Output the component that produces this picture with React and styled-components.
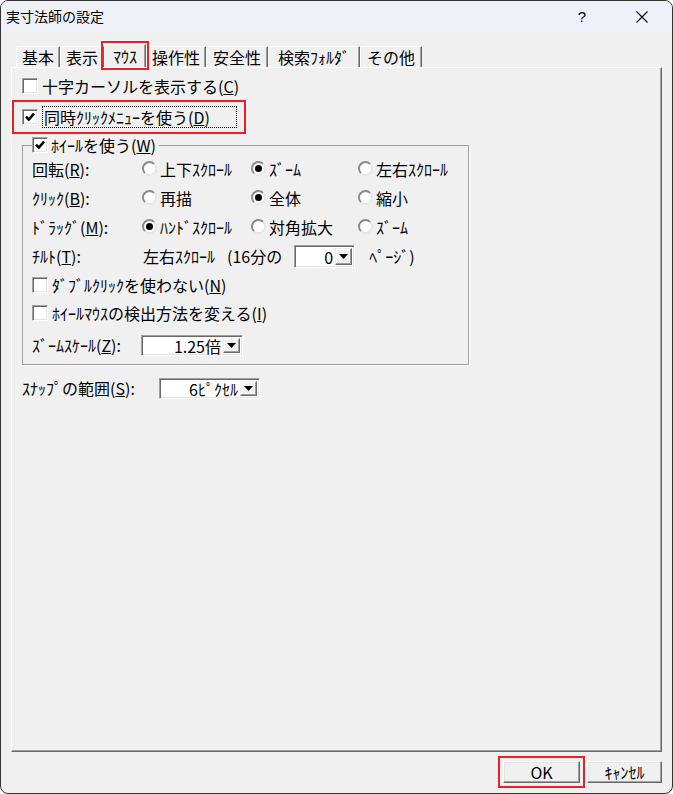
import React from 'react'
import styled, { createGlobalStyle } from 'styled-components'

const GlobalStyle = createGlobalStyle`
  html, body {
    margin: 0;
    padding: 0;
    background: #ffffff;
  }
  body {
    font-family: "Noto Sans CJK JP", "Noto Sans", sans-serif;
    font-size: 16px;
    color: #000;
  }
`

const Window = styled.div`
  width: 673px;
  height: 794px;
  box-sizing: border-box;
  border: 1px solid #333;
  border-radius: 8px;
  overflow: hidden;
  background: #f0f0f0;
  display: flex;
  flex-direction: column;
`

const TitleBar = styled.div`
  height: 31px;
  flex: none;
  background: #eef1f8;
  display: flex;
  align-items: center;
  padding-left: 5px;
`

const Title = styled.div`
  flex: 1;
  font-size: 14px;
  line-height: 31px;
`

const CaptionButton = styled.div`
  width: 60px;
  height: 31px;
  display: flex;
  align-items: center;
  justify-content: center;
  font-family: "Liberation Sans", sans-serif;
  font-size: 15px;
`

const Body = styled.div`
  flex: 1;
  display: flex;
  flex-direction: column;
  padding: 0 10px;
`

const TabStrip = styled.div`
  display: flex;
  align-items: flex-end;
  margin-top: 14px;
  padding-left: 5px;
  height: 21px;
`

const Tab = styled.div`
  height: ${p => (p.$active ? 23 : 21)}px;
  box-sizing: border-box;
  padding: 0 ${p => p.$pad || 5}px;
  display: flex;
  align-items: center;
  border-left: 1px solid #fff;
  border-top: 1px solid #fff;
  border-right: 1px solid #696969;
  box-shadow: inset -1px 0 #a0a0a0;
  line-height: 1;
  position: relative;
  ${p => p.$active && `
    outline: 2px solid #e8202a;
    outline-offset: 1px;
    z-index: 1;
  `}
`

const Panel = styled.div`
  height: 685px;
  box-sizing: border-box;
  border-top: 1px solid #fff;
  border-left: 1px solid #fff;
  border-right: 1px solid #696969;
  border-bottom: 1px solid #696969;
  box-shadow: inset -1px -1px #a0a0a0;
  padding: 7px 0 0 10px;
  display: flex;
  flex-direction: column;
  align-items: flex-start;
`

const Row = styled.div`
  display: flex;
  align-items: center;
  height: ${p => p.$h || 21}px;
  margin-top: ${p => p.$mt || 0}px;
  gap: ${p => p.$gap ?? 4}px;
`

const HighlightRow = styled.div`
  display: flex;
  align-items: center;
  gap: 4px;
  height: 30px;
  width: 230px;
  box-sizing: border-box;
  margin: 6px 0 0 -8px;
  padding-left: 8px;
  outline: 2px solid #e8202a;
`

const FocusLabel = styled.span`
  border: 1px dotted #000;
  padding: 1px 2px 1px 1px;
  min-width: 190px;
  line-height: 18px;
`

const Box = styled.span`
  width: 16px;
  height: 16px;
  flex: none;
  box-sizing: border-box;
  background: #fff;
  border: 1px solid;
  border-color: #a0a0a0 #fff #fff #a0a0a0;
  box-shadow: inset 1px 1px #696969, inset -1px -1px #e3e3e3;
  display: flex;
  align-items: center;
  justify-content: center;
`

const Check = ({ checked }) => (
  <Box>
    {checked && (
      <svg width="10" height="10" viewBox="0 0 10 10">
        <path d="M1 4.6 L3.8 7.6 L9 1.6" stroke="#000" strokeWidth="2.6" fill="none" />
      </svg>
    )}
  </Box>
)

const RadioDot = styled.span`
  width: 15px;
  height: 15px;
  flex: none;
  box-sizing: border-box;
  border-radius: 50%;
  background: #fff;
  border: 2px solid;
  border-color: #8a8a8a #e6e6e6 #e6e6e6 #8a8a8a;
  display: flex;
  align-items: center;
  justify-content: center;
  &::after {
    content: '';
    width: 7px;
    height: 7px;
    border-radius: 50%;
    background: ${p => (p.$on ? '#000' : 'transparent')};
  }
`

const Option = styled.span`
  display: flex;
  align-items: center;
  gap: 3px;
  white-space: nowrap;
`

const Radio = ({ on, children }) => (
  <Option>
    <RadioDot $on={on} />
    {children}
  </Option>
)

const Group = styled.fieldset`
  margin: 4px 0 0 0;
  padding: 0 9px 7px 9px;
  width: 447px;
  box-sizing: border-box;
  min-width: 0;
  border: 1px solid #a0a0a0;
  box-shadow: 1px 1px 0 #fff;
`

const Legend = styled.legend`
  padding: 0 3px 0 0;
  height: 18px;
  display: flex;
  align-items: center;
  gap: 3px;
`

const Grid = styled.div`
  display: grid;
  grid-template-columns: 110px 109px 107px 1fr;
  grid-auto-rows: 29px;
  align-items: center;
`

const Label = styled.span`
  white-space: nowrap;
  min-width: ${p => p.$w || 0}px;
`

const TiltRow = styled.div`
  display: flex;
  align-items: center;
  height: 30px;
`

const TiltPart = styled.span`
  white-space: nowrap;
  margin-left: ${p => p.$ml || 0}px;
`

const ComboFrame = styled.div`
  width: ${p => p.$w}px;
  height: ${p => p.$h || 21}px;
  margin-left: ${p => p.$ml || 0}px;
  flex: none;
  box-sizing: border-box;
  background: #fff;
  border: 1px solid;
  border-color: #a0a0a0 #fff #fff #a0a0a0;
  box-shadow: inset 1px 1px #696969, inset -1px -1px #e3e3e3;
  padding: 2px;
  display: flex;
`

const ComboValue = styled.span`
  flex: 1;
  text-align: right;
  padding-right: 2px;
  line-height: ${p => (p.$h || 21) - 4}px;
  white-space: nowrap;
`

const ComboArrow = styled.span`
  width: 17px;
  box-sizing: border-box;
  background: #f0f0f0;
  border: 1px solid;
  border-color: #f0f0f0 #696969 #696969 #f0f0f0;
  box-shadow: inset -1px -1px #a0a0a0, inset 1px 1px #fff;
  display: flex;
  align-items: center;
  justify-content: center;
`

const Combo = ({ w, h, ml, children }) => (
  <ComboFrame $w={w} $h={h} $ml={ml}>
    <ComboValue $h={h}>{children}</ComboValue>
    <ComboArrow>
      <svg width="9" height="5" viewBox="0 0 9 5">
        <path d="M0 0 H9 L4.5 5 Z" fill="#000" />
      </svg>
    </ComboArrow>
  </ComboFrame>
)

const Footer = styled.div`
  display: flex;
  justify-content: flex-end;
  gap: 4px;
  margin-top: 9px;
`

const Button = styled.div`
  width: ${p => p.$w}px;
  height: 22px;
  box-sizing: border-box;
  background: #f0f0f0;
  border: 1px solid;
  border-color: #fff #696969 #696969 #fff;
  box-shadow: inset -1px -1px #a0a0a0, inset 1px 1px #e3e3e3;
  display: flex;
  align-items: center;
  justify-content: center;
  font-size: ${p => p.$fs || 16}px;
  ${p => p.$marked && `
    outline: 2px solid #e8202a;
    outline-offset: 3px;
  `}
`

const ButtonSlot = styled.div`
  padding-right: 3px;
`

const u = ch => <u>{ch}</u>

export default function App() {
  return (
    <>
      <GlobalStyle />
      <Window>
        <TitleBar>
          <Title>実寸法師の設定</Title>
          <CaptionButton>?</CaptionButton>
          <CaptionButton>
            <svg width="14" height="14" viewBox="0 0 14 14">
              <path d="M1.5 1.5 L12.5 12.5 M12.5 1.5 L1.5 12.5" stroke="#000" strokeWidth="1.1" />
            </svg>
          </CaptionButton>
        </TitleBar>
        <Body>
          <TabStrip>
            <Tab>基本</Tab>
            <Tab>表示</Tab>
            <Tab $active $pad={8}>ﾏｳｽ</Tab>
            <Tab>操作性</Tab>
            <Tab $pad={6}>安全性</Tab>
            <Tab $pad={9}>検索ﾌｫﾙﾀﾞ</Tab>
            <Tab $pad={6}>その他</Tab>
          </TabStrip>
          <Panel>
            <Row $h={21}>
              <Check />
              <span>十字カーソルを表示する({u('C')})</span>
            </Row>
            <HighlightRow>
              <Check checked />
              <FocusLabel>同時ｸﾘｯｸﾒﾆｭｰを使う({u('D')})</FocusLabel>
            </HighlightRow>
            <Group>
              <Legend>
                <Check checked />
                <span>ﾎｲｰﾙを使う({u('W')})</span>
              </Legend>
              <Grid>
                <Label>回転({u('R')}):</Label>
                <Radio>上下ｽｸﾛｰﾙ</Radio>
                <Radio on>ｽﾞｰﾑ</Radio>
                <Radio>左右ｽｸﾛｰﾙ</Radio>
                <Label>ｸﾘｯｸ({u('B')}):</Label>
                <Radio>再描</Radio>
                <Radio on>全体</Radio>
                <Radio>縮小</Radio>
                <Label>ﾄﾞﾗｯｸﾞ({u('M')}):</Label>
                <Radio on>ﾊﾝﾄﾞｽｸﾛｰﾙ</Radio>
                <Radio>対角拡大</Radio>
                <Radio>ｽﾞｰﾑ</Radio>
              </Grid>
              <TiltRow>
                <Label $w={111}>ﾁﾙﾄ({u('T')}):</Label>
                <TiltPart>左右ｽｸﾛｰﾙ</TiltPart>
                <TiltPart $ml={12}>(16分の</TiltPart>
                <Combo w={61} h={23} ml={12}>0</Combo>
                <TiltPart $ml={14}>ﾍﾟｰｼﾞ)</TiltPart>
              </TiltRow>
              <Row $h={28}>
                <Check />
                <span>ﾀﾞﾌﾞﾙｸﾘｯｸを使わない({u('N')})</span>
              </Row>
              <Row $h={28}>
                <Check />
                <span>ﾎｲｰﾙﾏｳｽの検出方法を変える({u('I')})</span>
              </Row>
              <Row $h={24} $mt={6} $gap={0}>
                <Label $w={109}>ｽﾞｰﾑｽｹｰﾙ({u('Z')}):</Label>
                <Combo w={102}>1.25倍</Combo>
              </Row>
            </Group>
            <Row $h={22} $mt={12} $gap={0}>
              <Label $w={137}>ｽﾅｯﾌﾟの範囲({u('S')}):</Label>
              <Combo w={101}>6ﾋﾟｸｾﾙ</Combo>
            </Row>
          </Panel>
          <Footer>
            <ButtonSlot>
              <Button $w={77} $marked>OK</Button>
            </ButtonSlot>
            <Button $w={75}>ｷｬﾝｾﾙ</Button>
          </Footer>
        </Body>
      </Window>
    </>
  )
}
